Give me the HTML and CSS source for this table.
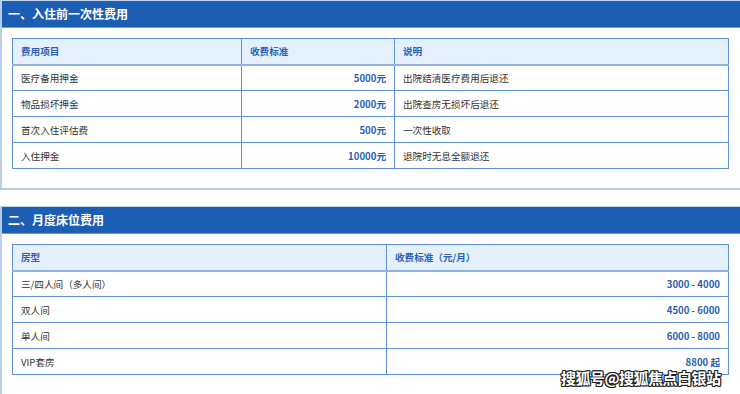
FILE: index.html
```html
<!DOCTYPE html>
<html lang="zh-CN">
<head>
<meta charset="utf-8">
<link rel="stylesheet" href="styles.css">
</head>
<body>
<div class="page">
  <section class="card">
    <h2 class="card-title">一、入住前一次性费用</h2>
    <div class="card-body">
      <table class="fee-table">
        <colgroup><col class="c1"><col class="c2"><col class="c3"></colgroup>
        <thead>
          <tr><th>费用项目</th><th>收费标准</th><th>说明</th></tr>
        </thead>
        <tbody>
          <tr><td>医疗备用押金</td><td class="num">5000元</td><td>出院结清医疗费用后退还</td></tr>
          <tr><td>物品损坏押金</td><td class="num">2000元</td><td>出院查房无损坏后退还</td></tr>
          <tr><td>首次入住评估费</td><td class="num">500元</td><td>一次性收取</td></tr>
          <tr><td>入住押金</td><td class="num">10000元</td><td>退院时无息全额退还</td></tr>
        </tbody>
      </table>
    </div>
  </section>
  <section class="card card-last">
    <h2 class="card-title">二、月度床位费用</h2>
    <div class="card-body">
      <table class="fee-table">
        <colgroup><col class="d1"><col class="d2"></colgroup>
        <thead>
          <tr><th>房型</th><th>收费标准（元/月）</th></tr>
        </thead>
        <tbody>
          <tr><td>三/四人间（多人间）</td><td class="num">3000 - 4000</td></tr>
          <tr><td>双人间</td><td class="num">4500 - 6000</td></tr>
          <tr><td>单人间</td><td class="num">6000 - 8000</td></tr>
          <tr><td>VIP套房</td><td class="num">8800 起</td></tr>
        </tbody>
      </table>
    </div>
  </section>
  <div class="watermark">搜狐号@搜狐焦点白银站</div>
</div>
</body>
</html>
```

FILE: styles.css
```css
html, body {
  margin: 0;
  padding: 0;
  background: #ffffff;
}
body {
  font-family: "Noto Sans CJK SC", "Noto Sans", "Liberation Sans", sans-serif;
  color: #333333;
  overflow: hidden;
}
.page {
  position: relative;
  width: 740px;
  height: 394px;
  overflow: hidden;
}
.card {
  border-top: 1px solid #c4d5ee;
  border-left: 2px solid #b9cde9;
  border-bottom: 2px solid #b9cde9;
  margin-bottom: 16px;
}
.card-last {
  border-bottom: none;
}
.card-title {
  margin: 0;
  height: 26px;
  background: #1c5eb3;
  color: #ffffff;
  font-size: 12px;
  font-weight: 700;
  line-height: 26px;
  padding-left: 6px;
  border-bottom: 1px solid #6f9bd6;
}
.card-body {
  padding: 10px 11px 19px 10px;
}
.fee-table {
  width: 100%;
  border-collapse: collapse;
  table-layout: fixed;
  font-size: 9.6px;
  line-height: 12px;
}
.c1 { width: 229px; }
.c2 { width: 153px; }
.c3 { width: auto; }
.d1 { width: 374px; }
.d2 { width: auto; }
.fee-table th,
.fee-table td {
  border: 1px solid #5e90d7;
  height: 26px;
  padding: 0 8px;
  text-align: left;
  box-sizing: border-box;
}
.fee-table th {
  background: #e5f0fd;
  color: #2a62b0;
  font-weight: 700;
  border-bottom: 2px solid #8fb3e6;
}
.fee-table td {
  color: #333333;
}
.fee-table td.num {
  text-align: right;
  color: #1f5fb5;
  font-weight: 700;
}
.watermark {
  position: absolute;
  left: 561px;
  top: 370px;
  font-size: 15px;
  line-height: 16px;
  color: #ffffff;
  font-weight: 700;
  letter-spacing: -0.5px;
  text-shadow: -1px -1px 0 #222, 1px -1px 0 #222, -1px 1px 0 #222, 1px 1px 0 #222, 0 1px 0 #222, 0 -1px 0 #222, 1px 0 0 #222, -1px 0 0 #222;
}
```
